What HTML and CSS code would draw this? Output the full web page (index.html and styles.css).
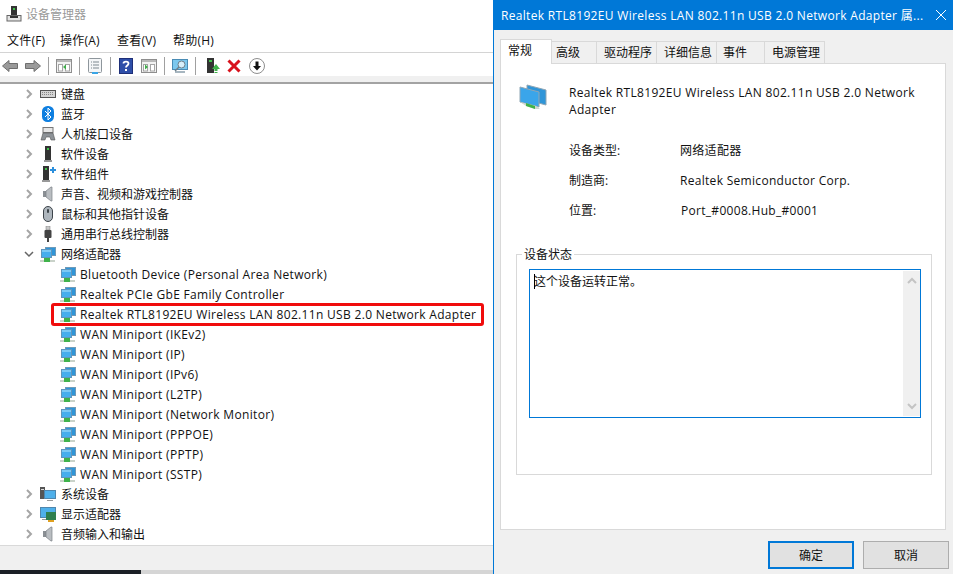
FILE: index.html
```html
<!DOCTYPE html>
<html lang="zh-CN">
<head>
<meta charset="utf-8">
<title>设备管理器</title>
<link rel="stylesheet" href="styles.css">
</head>
<body>
<svg class="defs" width="0" height="0" aria-hidden="true">
  <defs>
    <symbol id="net" viewBox="0 0 16 16">
      <rect x="5.500" y="1.500" width="10" height="8" fill="#2f95d8" stroke="#6f9ab8"/>
      <rect x="1.500" y="3.500" width="10" height="8" fill="#46aeee" stroke="#5f96bd"/>
      <rect x="2" y="4" width="9" height="2" fill="#7cc9f5"/>
      <rect x="0" y="14" width="15" height="2" fill="#c9d2c9"/>
      <rect x="4" y="12" width="6" height="4" fill="#3fb24a"/>
    </symbol>
    <symbol id="chev" viewBox="0 0 8 10">
      <path d="M2 1l4 4-4 4" fill="none" stroke="#a6a6a6" stroke-width="2"/>
    </symbol>
    <symbol id="chevd" viewBox="0 0 10 8">
      <path d="M1 2l4 4 4-4" fill="none" stroke="#666" stroke-width="1.500"/>
    </symbol>
    <symbol id="speaker" viewBox="0 0 16 16">
      <rect x="3" y="5" width="3" height="6" fill="#8a8f94"/>
      <path d="M6 5l5-4h1v14h-1L6 11z" fill="#b9bdc1" stroke="#7c8186" stroke-width=".7"/>
    </symbol>
    <symbol id="win" viewBox="0 0 16 16">
      <rect x=".5" y="1.500" width="15" height="13" fill="#f2f2f2" stroke="#8e8e8e"/>
      <rect x="1" y="2" width="14" height="2" fill="#b9b9b9"/>
      <rect x="2.500" y="6.500" width="4" height="6.500" fill="#fff" stroke="#a5a5a5"/>
      <rect x="9.500" y="6.500" width="4" height="6.500" fill="#fff" stroke="#a5a5a5"/>
    </symbol>
  </defs>
</svg>

<div class="desk">
  <section class="mgr">
    <header class="mgr-title">
      <svg class="ico" viewBox="0 0 16 16"><rect x="5" y="0" width="6" height="10" fill="#333"/><rect x="7" y="2" width="2" height="2" fill="#3fc04a"/><rect x="1" y="9.500" width="14" height="5.500" fill="#e4e4e4" stroke="#666"/><rect x="4" y="10" width="8" height="2" fill="#333"/></svg>
      <span>设备管理器</span>
    </header>
    <nav class="menu"><span>文件(F)</span><span>操作(A)</span><span>查看(V)</span><span>帮助(H)</span></nav>
    <div class="tools">
      <svg class="ico" viewBox="0 0 16 16"><path d="M.5 8L7 2.500V5.500h8.500v5H7v3z" fill="#9a9a9a" stroke="#6f6f6f"/></svg>
      <svg class="ico" viewBox="0 0 16 16"><path d="M15.500 8L9 2.500V5.500H.5v5H9v3z" fill="#9a9a9a" stroke="#6f6f6f"/></svg>
      <i class="sep"></i>
      <span class="tb"><svg class="ico"><use href="#win"/></svg><svg class="over" viewBox="0 0 16 16"><path d="M10 6.500v5L7 9z" fill="#3fae49"/></svg></span>
      <i class="sep"></i>
      <svg class="ico" viewBox="0 0 16 16"><rect x="1.500" y=".5" width="13" height="14" rx="1" fill="#f4f6f8" stroke="#8e969c"/><path d="M4 4h1m1 0h6M4 7h1m1 0h6M4 10h1m1 0h6" stroke="#7c8890"/><rect x="5" y="14" width="6" height="2" fill="#39a5e6"/></svg>
      <i class="sep"></i>
      <svg class="ico" viewBox="0 0 16 16"><rect x="1.500" y=".5" width="13" height="15" fill="#2e4ea8" stroke="#1e2f78"/><path d="M5.500 5.500C5.500 3 10.500 3 10.500 5.500 10.500 7.500 8 7.500 8 9.500" fill="none" stroke="#fff" stroke-width="1.800"/><rect x="7" y="11" width="2" height="2" fill="#fff"/></svg>
      <span class="tb"><svg class="ico"><use href="#win"/></svg><svg class="over" viewBox="0 0 16 16"><path d="M4 6.500v5L7 9z" fill="#3fae49"/></svg></span>
      <i class="sep"></i>
      <svg class="ico" viewBox="0 0 16 16"><rect x=".5" y="1.500" width="15" height="10" fill="#7cc8ee" stroke="#4a8cb5"/><rect x="3" y="13" width="10" height="2" fill="#a7b6c0"/><circle cx="9.500" cy="6.500" r="3.500" fill="#d7effa" stroke="#6e7f8a"/><path d="M7 9l-4 4" stroke="#6e7f8a" stroke-width="1.500"/></svg>
      <i class="sep"></i>
      <svg class="ico shift" viewBox="0 0 16 16"><rect x="1" y="0" width="7" height="15" fill="#333"/><rect x="3" y="2" width="3" height="2" fill="#3fc04a"/><path d="M6 11l4-5 4 5h-2.500v2h-3v-2z" fill="#3fb24a"/><rect x="8.500" y="14" width="3" height="1" fill="#3fb24a"/></svg>
      <svg class="ico" viewBox="0 0 16 16"><path d="M2.500 2.500l11 11m0-11l-11 11" stroke="#d8121c" stroke-width="3"/></svg>
      <svg class="ico" viewBox="0 0 16 16"><circle cx="8" cy="8" r="7.500" fill="#fff" stroke="#8e8e8e"/><path d="M6.500 3.500h3V8H12l-4 4.500L4 8h2.500z" fill="#111"/></svg>
    </div>
    <div class="strip"></div>
    <div class="tree">
      <div class="row"><svg class="chev"><use href="#chev"/></svg><svg class="ico" viewBox="0 0 16 16"><rect x=".5" y="4.500" width="15" height="7" fill="#d5d5d5" stroke="#555"/><path d="M2 6.500h12M2 8.500h12" stroke="#888" stroke-dasharray="1 1"/></svg><span>键盘</span></div>
      <div class="row"><svg class="chev"><use href="#chev"/></svg><svg class="ico" viewBox="0 0 16 16"><rect x="2" y="0" width="12" height="16" rx="5.500" fill="#0f7fe0"/><path d="M5 5l6 6-3 3V2l3 3-6 6" fill="none" stroke="#fff"/></svg><span>蓝牙</span></div>
      <div class="row"><svg class="chev"><use href="#chev"/></svg><svg class="ico" viewBox="0 0 16 16"><rect x="3" y="1.500" width="10" height="5" fill="#e6e6e6" stroke="#777"/><path d="M1 14l2-7h10l2 7h-4l-1-3H6l-1 3z" fill="#8d9297" stroke="#555" stroke-width=".6"/></svg><span>人机接口设备</span></div>
      <div class="row"><svg class="chev"><use href="#chev"/></svg><svg class="ico" viewBox="0 0 16 16"><rect x="5" y="0" width="6" height="14" fill="#333"/><rect x="7" y="2" width="2" height="2" fill="#3fc04a"/><rect x="4" y="14" width="8" height="2" fill="#999"/></svg><span>软件设备</span></div>
      <div class="row"><svg class="chev"><use href="#chev"/></svg><svg class="ico" viewBox="0 0 16 16"><rect x="3" y="0" width="6" height="14" fill="#333"/><rect x="5" y="2" width="2" height="2" fill="#3fc04a"/><rect x="2" y="14" width="8" height="2" fill="#999"/><path d="M10 3h2V1h2v2h2v2h-2v2h-2V5h-2z" fill="#2c8fdc"/></svg><span>软件组件</span></div>
      <div class="row"><svg class="chev"><use href="#chev"/></svg><svg class="ico"><use href="#speaker"/></svg><span>声音、视频和游戏控制器</span></div>
      <div class="row"><svg class="chev"><use href="#chev"/></svg><svg class="ico" viewBox="0 0 16 16"><rect x="3.500" y=".5" width="9" height="15" rx="4.500" fill="#aeb6bd" stroke="#3d444a"/><rect x="7" y="3" width="2" height="4" rx="1" fill="#3d444a"/></svg><span>鼠标和其他指针设备</span></div>
      <div class="row"><svg class="chev"><use href="#chev"/></svg><svg class="ico" viewBox="0 0 16 16"><rect x="6" y="0" width="4" height="4" fill="#c9c9c9" stroke="#777" stroke-width=".5"/><rect x="4.500" y="4" width="7" height="8" rx="1" fill="#444"/><path d="M8 12v4" stroke="#444" stroke-width="2"/></svg><span>通用串行总线控制器</span></div>
      <div class="row"><svg class="chev chev-open"><use href="#chevd"/></svg><svg class="ico"><use href="#net"/></svg><span>网络适配器</span></div>
      <div class="row kid"><svg class="ico"><use href="#net"/></svg><span>Bluetooth Device (Personal Area Network)</span></div>
      <div class="row kid"><svg class="ico"><use href="#net"/></svg><span>Realtek PCIe GbE Family Controller</span></div>
      <div class="row kid"><svg class="ico"><use href="#net"/></svg><span>Realtek RTL8192EU Wireless LAN 802.11n USB 2.0 Network Adapter</span><b class="mark"></b></div>
      <div class="row kid"><svg class="ico"><use href="#net"/></svg><span>WAN Miniport (IKEv2)</span></div>
      <div class="row kid"><svg class="ico"><use href="#net"/></svg><span>WAN Miniport (IP)</span></div>
      <div class="row kid"><svg class="ico"><use href="#net"/></svg><span>WAN Miniport (IPv6)</span></div>
      <div class="row kid"><svg class="ico"><use href="#net"/></svg><span>WAN Miniport (L2TP)</span></div>
      <div class="row kid"><svg class="ico"><use href="#net"/></svg><span>WAN Miniport (Network Monitor)</span></div>
      <div class="row kid"><svg class="ico"><use href="#net"/></svg><span>WAN Miniport (PPPOE)</span></div>
      <div class="row kid"><svg class="ico"><use href="#net"/></svg><span>WAN Miniport (PPTP)</span></div>
      <div class="row kid"><svg class="ico"><use href="#net"/></svg><span>WAN Miniport (SSTP)</span></div>
      <div class="row"><svg class="chev"><use href="#chev"/></svg><svg class="ico" viewBox="0 0 16 16"><rect x="0" y="1" width="5" height="12" fill="#555"/><rect x="1" y="3" width="3" height="1" fill="#ddd"/><rect x="4.500" y="4.500" width="11" height="8" fill="#4fb0ea" stroke="#4f86ad"/><rect x="7" y="14" width="6" height="1" fill="#999"/></svg><span>系统设备</span></div>
      <div class="row"><svg class="chev"><use href="#chev"/></svg><svg class="ico" viewBox="0 0 16 16"><rect x=".5" y="1.500" width="15" height="10" fill="#4fb0ea" stroke="#4f86ad"/><rect x="6" y="6" width="10" height="8" fill="#2f7f4f"/><rect x="8" y="14" width="6" height="2" fill="#e0a020"/><rect x="2" y="13" width="4" height="1" fill="#999"/></svg><span>显示适配器</span></div>
      <div class="row"><svg class="chev"><use href="#chev"/></svg><svg class="ico"><use href="#speaker"/></svg><span>音频输入和输出</span></div>
    </div>
    <div class="status"></div>
    <footer class="taskbar"><i class="task-dark"></i><i class="task-light"></i></footer>
  </section>

  <section class="dlg">
    <header class="dlg-title">
      <span class="dlg-name">Realtek RTL8192EU Wireless LAN 802.11n USB 2.0 Network Adapter 属...</span>
      <svg class="close" viewBox="0 0 10 10"><path d="M0 0l10 10M10 0L0 10" stroke="#fff" stroke-width="1"/></svg>
    </header>
    <div class="dlg-body">
      <div class="tabs">
        <span class="tab tab-on">常规</span>
        <span class="tab t-adv">高级</span>
        <span class="tab t60">驱动程序</span>
        <span class="tab t60">详细信息</span>
        <span class="tab t48">事件</span>
        <span class="tab t60">电源管理</span>
      </div>
      <div class="panel">
        <div class="head">
          <svg class="bigicon" viewBox="0 0 28 26">
            <path d="M8 1l19 5v15L8 16z" fill="#2f95d8" stroke="#8fa6b5"/>
            <path d="M1 3l19 5v15L1 18z" fill="#3aa5ea" stroke="#8fa6b5"/>
            <path d="M1 18l6 4 9 3 5 0-4-3z" fill="#cfd6cf"/>
            <path d="M7 19l9 3v3l-9-3z" fill="#3fb24a"/>
          </svg>
          <p class="devname">Realtek RTL8192EU Wireless LAN 802.11n USB 2.0 Network Adapter</p>
        </div>
        <dl class="info">
          <div class="inf"><dt>设备类型:</dt><dd>网络适配器</dd></div>
          <div class="inf"><dt>制造商:</dt><dd>Realtek Semiconductor Corp.</dd></div>
          <div class="inf"><dt>位置:</dt><dd class="nudge">Port_#0008.Hub_#0001</dd></div>
        </dl>
        <fieldset class="group">
          <legend>设备状态</legend>
          <div class="box">
            <div class="boxtext"><i class="caret"></i>这个设备运转正常。</div>
            <div class="sbar">
              <svg viewBox="0 0 10 8"><path d="M1 6l4-4 4 4" fill="none" stroke="#c4c4c4" stroke-width="2"/></svg>
              <svg viewBox="0 0 10 8"><path d="M1 2l4 4 4-4" fill="none" stroke="#c4c4c4" stroke-width="2"/></svg>
            </div>
          </div>
        </fieldset>
      </div>
      <div class="btns">
        <button class="btn btn-def">确定</button>
        <button class="btn">取消</button>
      </div>
    </div>
  </section>
</div>
</body>
</html>
```
FILE: styles.css
```css
* { box-sizing: border-box; }
html, body { margin: 0; height: 100%; overflow: hidden; }
body { font: 12px/17px "Open Sans", "Noto Sans CJK SC", sans-serif; color: #111; background: #fff; }
.defs { position: absolute; }
.desk { display: flex; width: 953px; height: 574px; }
.ico { width: 16px; height: 16px; flex: none; display: block; }

.mgr { width: 493px; height: 574px; display: flex; flex-direction: column; flex: none; }
.mgr-title { height: 28px; display: flex; align-items: center; gap: 4px; padding: 0 0 0 6px; color: #999; flex: none; }
.menu { height: 25px; display: flex; align-items: center; padding-left: 7px; gap: 11px; border-bottom: 1px solid #d4d4d4; flex: none; letter-spacing: .2px; }
.menu span { width: 42px; }
.menu span:nth-child(2) { width: 46px; }
.menu span:nth-child(3) { width: 45px; }
.tools { height: 23px; display: flex; align-items: center; gap: 7px; padding: 2px 0 0 2px; flex: none; }
.tb { position: relative; width: 16px; height: 16px; flex: none; }
.over { position: absolute; inset: 0; width: 16px; height: 16px; }
.sep { width: 1px; height: 18px; background: #a0a0a0; flex: none; }
.shift { margin-left: 3px; margin-right: -3px; }
.strip { height: 8px; background: #f0f0f0; border-bottom: 2px solid #a3a3a3; flex: none; }

.tree { flex: 1; min-height: 0; border-bottom: 1px solid #d9d9d9; }
.row { height: 20px; display: flex; align-items: center; padding-left: 25px; position: relative; white-space: nowrap; }
.row .ico { margin-right: 5px; }
.row.kid { padding-left: 60px; letter-spacing: .32px; }
.row.kid .ico { margin-right: 4px; }
.chev { width: 8px; height: 10px; margin-right: 7px; flex: none; }
.chev-open { width: 10px; height: 8px; margin-left: -1px; margin-right: 6px; }
.mark { position: absolute; left: 51px; top: -1px; width: 433px; height: 23px; border: 3px solid #f00c0c; border-radius: 3px; }

.status { height: 24px; background: #f0f0f0; flex: none; }
.taskbar { height: 4px; display: flex; flex: none; }
.task-dark { width: 141px; background: #1b2026; }
.task-light { flex: 1; background: #d5d5d5; }

.dlg { flex: 1; height: 574px; display: flex; flex-direction: column; border-left: 1px solid #0078d7; }
.dlg-title { height: 30px; background: #0078d7; color: #fff; display: flex; align-items: center; padding: 0 7px 0 7px; justify-content: space-between; flex: none; }
.dlg-name { letter-spacing: .32px; }
.close { width: 10px; height: 10px; margin-right: 0; }
.dlg-body { flex: 1; background: #f0f0f0; padding: 9px 4px 0 6px; display: flex; flex-direction: column; }
.tabs { display: flex; height: 24px; align-items: flex-end; position: relative; z-index: 1; flex: none; }
.tab { height: 22px; border: 1px solid #d9d9d9; border-bottom: 0; margin-left: -1px; width: 49px; display: flex; align-items: center; padding-left: 6px; }
.tab-on { height: 25px; width: 52px; margin: 0 0 -1px; background: #fff; padding: 0 0 3px 7px; }
.t-adv { width: 46px; padding-left: 4px; }
.t60 { width: 61px; padding-left: 7px; }
.t48 { width: 49px; }

.panel { height: 467px; width: 446px; background: #fff; border: 1px solid #d9d9d9; flex: none; padding: 20px 13px 0 15px; }
.head { display: flex; padding-left: 3px; gap: 22px; }
.bigicon { width: 28px; height: 26px; flex: none; }
.devname { margin: 0; width: 358px; letter-spacing: .32px; }
.info { margin: 17px 0 0 53px; }
.inf { display: flex; height: 30px; align-items: center; }
.inf dt { width: 111px; }
.inf dd { margin: 0; letter-spacing: .3px; }
.nudge { padding-left: 1px; }
.group { margin: 21px 0 0; padding: 0 10px 0 12px; height: 229px; border: 1px solid #d9d9d9; min-width: 0; }
.group legend { padding: 0 2px; margin-left: -7px; }
.box { height: 149px; margin-top: 6px; border: 1px solid #0078d7; background: #fff; display: flex; justify-content: space-between; }
.boxtext { padding: 3px 0 0 4px; position: relative; }
.caret { position: absolute; left: 4px; top: 4px; width: 1px; height: 15px; background: #000; }
.sbar { width: 17px; margin: 1px 0; background: #f0f0f0; display: flex; flex-direction: column; justify-content: space-between; align-items: center; padding: 6px 0; }
.sbar svg { width: 10px; height: 8px; }

.btns { display: flex; justify-content: flex-end; gap: 9px; padding: 11px 0 0; flex: none; }
.btn { width: 86px; height: 28px; background: #e1e1e1; border: 1px solid #adadad; padding: 0; font: inherit; color: inherit; }
.btn-def { border: 2px solid #0078d7; }
```
